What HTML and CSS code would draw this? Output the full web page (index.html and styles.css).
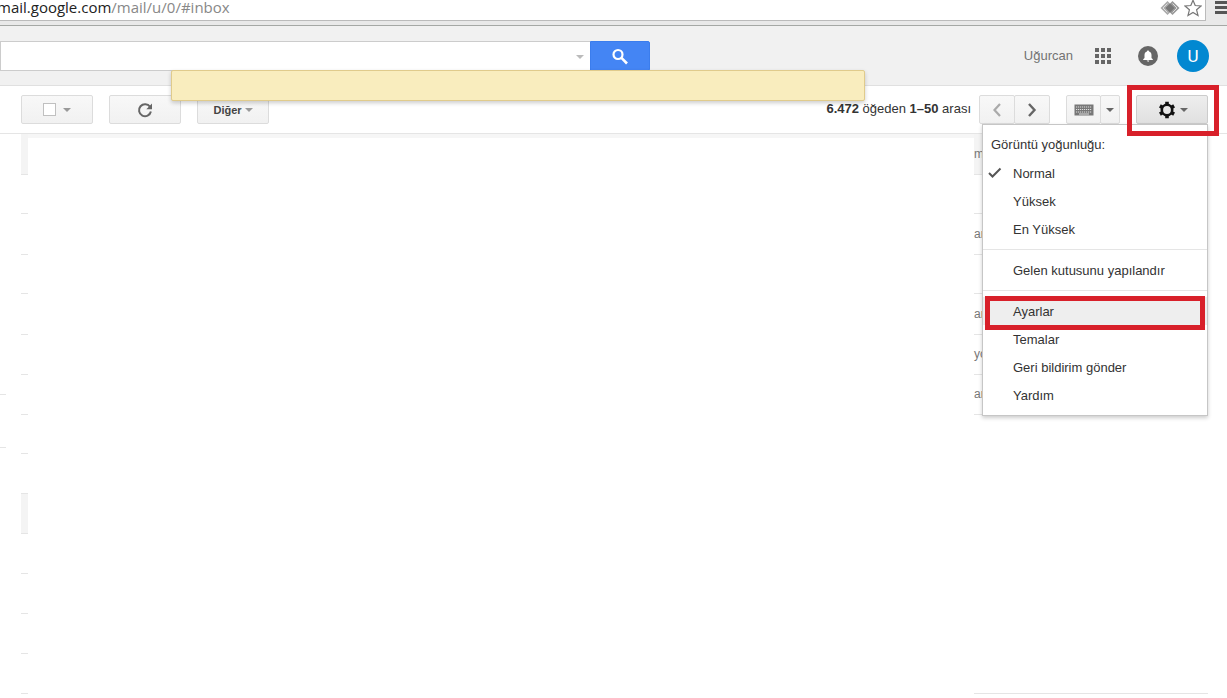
FILE: index.html
```html
<!DOCTYPE html>
<html lang="tr">
<head>
    <meta charset="UTF-8">
    <meta name="viewport" content="width=device-width, initial-scale=1.0">
    <title>Gelen Kutusu</title>
    <link rel="stylesheet" href="styles.css">
</head>
<body>
    <div class="browser-bar">
        <div class="address">
            <span class="url"><b>mail.google.com</b>/mail/u/0/#inbox</span>
            <svg class="diamond" width="20" height="16" viewBox="0 0 20 16">
                <path d="M7.500 1L14.500 8L7.500 15L0.500 8Z" fill="#aaa"/>
                <path d="M12.500 1L19.500 8L12.500 15L5.500 8Z" fill="#999"/>
                <path d="M10 3.500L14.500 8L10 12.500L5.500 8Z" fill="#777"/>
                <path d="M7.500 3.500L3 8L7.500 12.500M12.500 3.500L17 8L12.500 12.500" fill="none" stroke="#ddd"/>
            </svg>
            <svg class="star" width="18" height="18" viewBox="0 0 18 18">
                <path d="M9 0.200L11.200 5.500L17 6L12.600 9.800L14 15.500L9 12.400L4 15.500L5.400 9.800L1 6L6.800 5.500Z" fill="#fff" stroke="#777" stroke-width="1.200"/>
            </svg>
        </div>
        <svg class="burger" width="12" height="16" viewBox="0 0 12 16">
            <path d="M0 2.500H12M0 7.500H12M0 12.500H12" stroke="#555" stroke-width="3"/>
        </svg>
    </div>

    <header class="header">
        <form class="search">
            <input type="text" aria-label="Arama">
            <span class="arrow search-arrow"></span>
            <button type="button" aria-label="Ara">
                <svg width="18" height="18" viewBox="0 0 18 18">
                    <circle cx="7" cy="7.500" r="4.500" fill="none" stroke="#fff" stroke-width="2.200"/>
                    <path d="M10.200 10.700L16 16.500" stroke="#fff" stroke-width="2.600"/>
                </svg>
            </button>
        </form>
        <div class="account">
            <a class="name" href="#">Uğurcan</a>
            <svg class="apps" width="16" height="16" viewBox="0 0 16 16" fill="#666">
                <path d="M0 0h4v4H0zM6 0h4v4H6zM12 0h4v4h-4zM0 6h4v4H0zM6 6h4v4H6zM12 6h4v4h-4zM0 12h4v4H0zM6 12h4v4H6zM12 12h4v4h-4z"/>
            </svg>
            <svg class="bell" width="20" height="20" viewBox="0 0 20 20">
                <circle cx="10" cy="10" r="10" fill="#666"/>
                <path d="M10 4.500c.7 0 1 .4 1 1 1.700.5 2.500 1.800 2.500 3.500v3l1.300 1.200v.8H5.200v-.8L6.500 12V9c0-1.700.8-3 2.500-3.500 0-.6.300-1 1-1zM8.800 14.500h2.400c0 .8-.5 1.200-1.200 1.200s-1.200-.4-1.200-1.200z" fill="#fff"/>
            </svg>
            <a class="avatar" href="#">U</a>
        </div>
        <div class="notice"></div>
    </header>

    <div class="toolbar">
        <div class="btn">
            <input type="checkbox" aria-label="Seç">
            <span class="arrow"></span>
        </div>
        <button class="btn" type="button" aria-label="Yenile">
            <svg width="16" height="16" viewBox="0 0 16 16">
                <path d="M13 4.800A6 6 0 1 0 13.900 9.500" fill="none" stroke="#666" stroke-width="2"/>
                <path d="M15 1.500V7.200H9.300Z" fill="#666"/>
            </svg>
        </button>
        <button class="btn more" type="button">Diğer <span class="arrow"></span></button>

        <div class="count"><b>6.472</b> öğeden <b>1–50</b> arası</div>
        <div class="group pager">
            <button class="btn" type="button" aria-label="Yeni">
                <svg width="10" height="14" viewBox="0 0 10 14"><path d="M8 1L2.500 7L8 13" fill="none" stroke="#aaa" stroke-width="2.200"/></svg>
            </button>
            <button class="btn" type="button" aria-label="Eski">
                <svg width="10" height="14" viewBox="0 0 10 14"><path d="M2 1L7.500 7L2 13" fill="none" stroke="#666" stroke-width="2.400"/></svg>
            </button>
        </div>
        <div class="group keyboard">
            <button class="btn" type="button" aria-label="Klavye">
                <svg width="20" height="12" viewBox="0 0 20 12">
                    <path d="M0.500 0.500H19.500V11.500H0.500Z" fill="#777"/>
                    <path d="M2 3H18M2 5.500H18M2 8H18" stroke="#ddd" stroke-dasharray="1.200 0.800"/>
                    <path d="M5 10H15" stroke="#ddd"/>
                </svg>
            </button>
            <button class="btn" type="button" aria-label="Giriş araçları"><span class="arrow dark"></span></button>
        </div>
        <div class="settings">
            <button class="btn gear" type="button" aria-label="Ayarlar">
                <svg width="18" height="18" viewBox="0 0 18 18">
                    <circle cx="9" cy="9" r="5.200" fill="none" stroke="#111" stroke-width="2.600"/>
                    <path d="M9 0.800V3.500M9 14.500V17.200M1.900 4.900L4.240 6.250M13.760 11.750L16.100 13.100M1.900 13.100L4.240 11.750M13.760 6.250L16.100 4.900" stroke="#111" stroke-width="3.600"/>
                </svg>
                <span class="arrow dark"></span>
            </button>
            <div class="menu">
                <div class="menu-title">Görüntü yoğunluğu:</div>
                <button type="button">
                    <svg class="check" width="14" height="12" viewBox="0 0 14 12"><path d="M1 6L4.500 9.500L12.500 1.500" fill="none" stroke="#555" stroke-width="2"/></svg>
                    Normal
                </button>
                <button type="button">Yüksek</button>
                <button type="button">En Yüksek</button>
                <hr>
                <button type="button">Gelen kutusunu yapılandır</button>
                <hr>
                <button class="active" type="button">Ayarlar</button>
                <button type="button">Temalar</button>
                <button type="button">Geri bildirim gönder</button>
                <button type="button">Yardım</button>
            </div>
        </div>
    </div>

    <div class="content">
        <div class="sidebar">
            <hr>
            <hr>
        </div>
        <div class="mails">
            <div class="mail read first"><i></i><i></i><span>m</span></div>
            <div class="mail"><i></i><i></i><span></span></div>
            <div class="mail"><i></i><i></i><span>ar</span></div>
            <div class="mail"><i></i><i></i><span></span></div>
            <div class="mail"><i></i><i></i><span>ar</span></div>
            <div class="mail"><i></i><i></i><span>yo</span></div>
            <div class="mail"><i></i><i></i><span>ar</span></div>
            <div class="mail"><i></i></div>
            <div class="mail"><i></i></div>
            <div class="mail read"><i></i></div>
            <div class="mail"><i></i></div>
            <div class="mail"><i></i></div>
            <div class="mail"><i></i></div>
            <div class="mail"><i></i><i></i><span></span></div>
        </div>
    </div>
</body>
</html>
```
FILE: styles.css
```css
* {
    box-sizing: border-box;
}
body {
    margin: 0;
    font-family: "Liberation Sans", Arial, sans-serif;
    font-size: 13px;
    color: #333;
    background: #fff;
    overflow-x: hidden;
}
button {
    font-family: inherit;
    font-size: 13px;
    color: inherit;
    cursor: pointer;
}
a {
    text-decoration: none;
}
svg {
    display: block;
    flex: none;
}

/* browser */
.browser-bar {
    display: flex;
    justify-content: space-between;
    height: 26px;
    background: #e9e9e9;
    border-bottom: 1px solid #a5a8a5;
}
.address {
    display: flex;
    flex: 1;
    gap: 4px;
    height: 21px;
    padding-right: 3px;
    background: #fff;
    border: 1px solid #bbb;
    border-width: 0 1px 1px 0;
}
.url {
    flex: 1;
    margin-left: -3px;
    font-family: "Open Sans", "Noto Sans", sans-serif;
    font-size: 15px;
    line-height: 14px;
    color: #888;
}
.url b {
    font-weight: normal;
    color: #222;
}
.burger {
    margin-left: 9px;
}

/* header */
.header {
    position: relative;
    display: flex;
    align-items: center;
    justify-content: space-between;
    height: 60px;
    padding-right: 18px;
    background: #f1f1f1;
    border-bottom: 1px solid #e0e0e0;
}
.search {
    display: flex;
    position: relative;
    width: 650px;
    height: 30px;
}
.search input {
    flex: 1;
    padding: 0 24px 0 8px;
    border: 1px solid #ccc;
    border-right: 0;
    background: #fff;
}
.search button {
    display: flex;
    align-items: center;
    justify-content: center;
    width: 60px;
    border: 1px solid #3b7ded;
    border-radius: 0 2px 2px 0;
    background: #4485f4;
}
.search-arrow {
    position: absolute;
    right: 66px;
    top: 14px;
}
.arrow {
    width: 0;
    border: 4px solid transparent;
    border-top-color: #999;
    border-bottom: 0;
}
.search .arrow {
    border-top-color: #bbb;
}
.arrow.dark {
    border-top-color: #666;
}
.account {
    display: flex;
    align-items: center;
}
.name {
    margin-right: 22px;
    color: #737373;
}
.apps {
    margin-right: 27px;
}
.bell {
    margin-right: 19px;
}
.avatar {
    width: 32px;
    border-radius: 50%;
    background: #0288d1;
    color: #fff;
    font-family: Roboto, sans-serif;
    font-size: 17px;
    line-height: 32px;
    text-align: center;
}
.notice {
    position: absolute;
    left: 171px;
    top: 44px;
    z-index: 2;
    width: 694px;
    height: 31px;
    background: #f9edbe;
    border: 1px solid #e0cb8c;
    border-radius: 2px;
    box-shadow: 0 2px 4px rgba(0,0,0,0.2);
}

/* toolbar */
.toolbar {
    display: flex;
    align-items: center;
    height: 48px;
    padding: 0 19px 0 21px;
    border-bottom: 1px solid #e5e5e5;
}
.btn {
    display: flex;
    align-items: center;
    justify-content: center;
    gap: 7px;
    width: 72px;
    height: 29px;
    margin-right: 16px;
    padding: 0;
    border: 1px solid #dcdcdc;
    border-radius: 2px;
    background: linear-gradient(#f8f8f8, #f1f1f1);
}
.btn input {
    appearance: none;
    width: 13px;
    height: 13px;
    margin: 0;
    border: 1px solid #c0c0c0;
    background: #fff;
}
.more {
    gap: 3px;
    font-size: 11px;
    font-weight: bold;
    color: #444;
}
.count {
    margin-left: auto;
    margin-right: 8px;
    padding-bottom: 2px;
    color: #333;
    white-space: nowrap;
}
.group {
    display: flex;
    margin-right: 16px;
}
.group .btn {
    width: 36px;
    margin: 0;
}
.group .btn + .btn {
    margin-left: -1px;
}
.keyboard .btn {
    width: 35px;
}
.keyboard .btn + .btn {
    width: 20px;
}
.settings {
    position: relative;
}
.btn.gear {
    gap: 4px;
    margin: 0;
    padding-left: 2px;
    border-color: #ccc;
    background: linear-gradient(#eee, #e0e0e0);
}
.settings::after {
    content: "";
    position: absolute;
    inset: -10px -11px -12px -9px;
    z-index: 4;
    border: 5px solid #d8202a;
    pointer-events: none;
}

/* settings menu */
.menu {
    position: absolute;
    top: 100%;
    right: 0;
    z-index: 3;
    width: 226px;
    padding: 6px 0;
    background: #fff;
    border: 1px solid #c6c6c6;
    box-shadow: 0 2px 4px rgba(0,0,0,0.2);
}
.menu-title {
    padding-left: 8px;
    line-height: 28px;
}
.menu button {
    position: relative;
    display: block;
    width: 100%;
    height: 28px;
    padding: 0 0 0 30px;
    border: 0;
    background: none;
    text-align: left;
}
.menu hr {
    margin: 6px 0;
    border: 0;
    border-top: 1px solid #e5e5e5;
}
.menu .active {
    background: #eee;
}
.menu .active::after {
    content: "";
    position: absolute;
    inset: -1px 2px -5px;
    z-index: 1;
    border: 5px solid #d8202a;
}
.check {
    position: absolute;
    left: 5px;
    top: 8px;
}

/* mail list */
.content {
    display: flex;
    padding-right: 19px;
}
.sidebar {
    width: 21px;
    padding-top: 260px;
}
.sidebar hr {
    width: 6px;
    margin: 0 0 52px;
    border: 0;
    border-top: 1px solid #e5e5e5;
}
.mails {
    flex: 1;
}
.mail {
    display: grid;
    grid-template-columns: 7px 1fr 234px;
    height: 40px;
}
.mail i:first-child,
.mail span {
    border-bottom: 1px solid #e5e5e5;
}
.mail span {
    font-size: 12px;
    line-height: 40px;
    color: #777;
}
.read i:first-child,
.read span {
    background: #f4f4f4;
}
.first i:nth-child(2) {
    border-top: 4px solid #f6f6f6;
}
```
